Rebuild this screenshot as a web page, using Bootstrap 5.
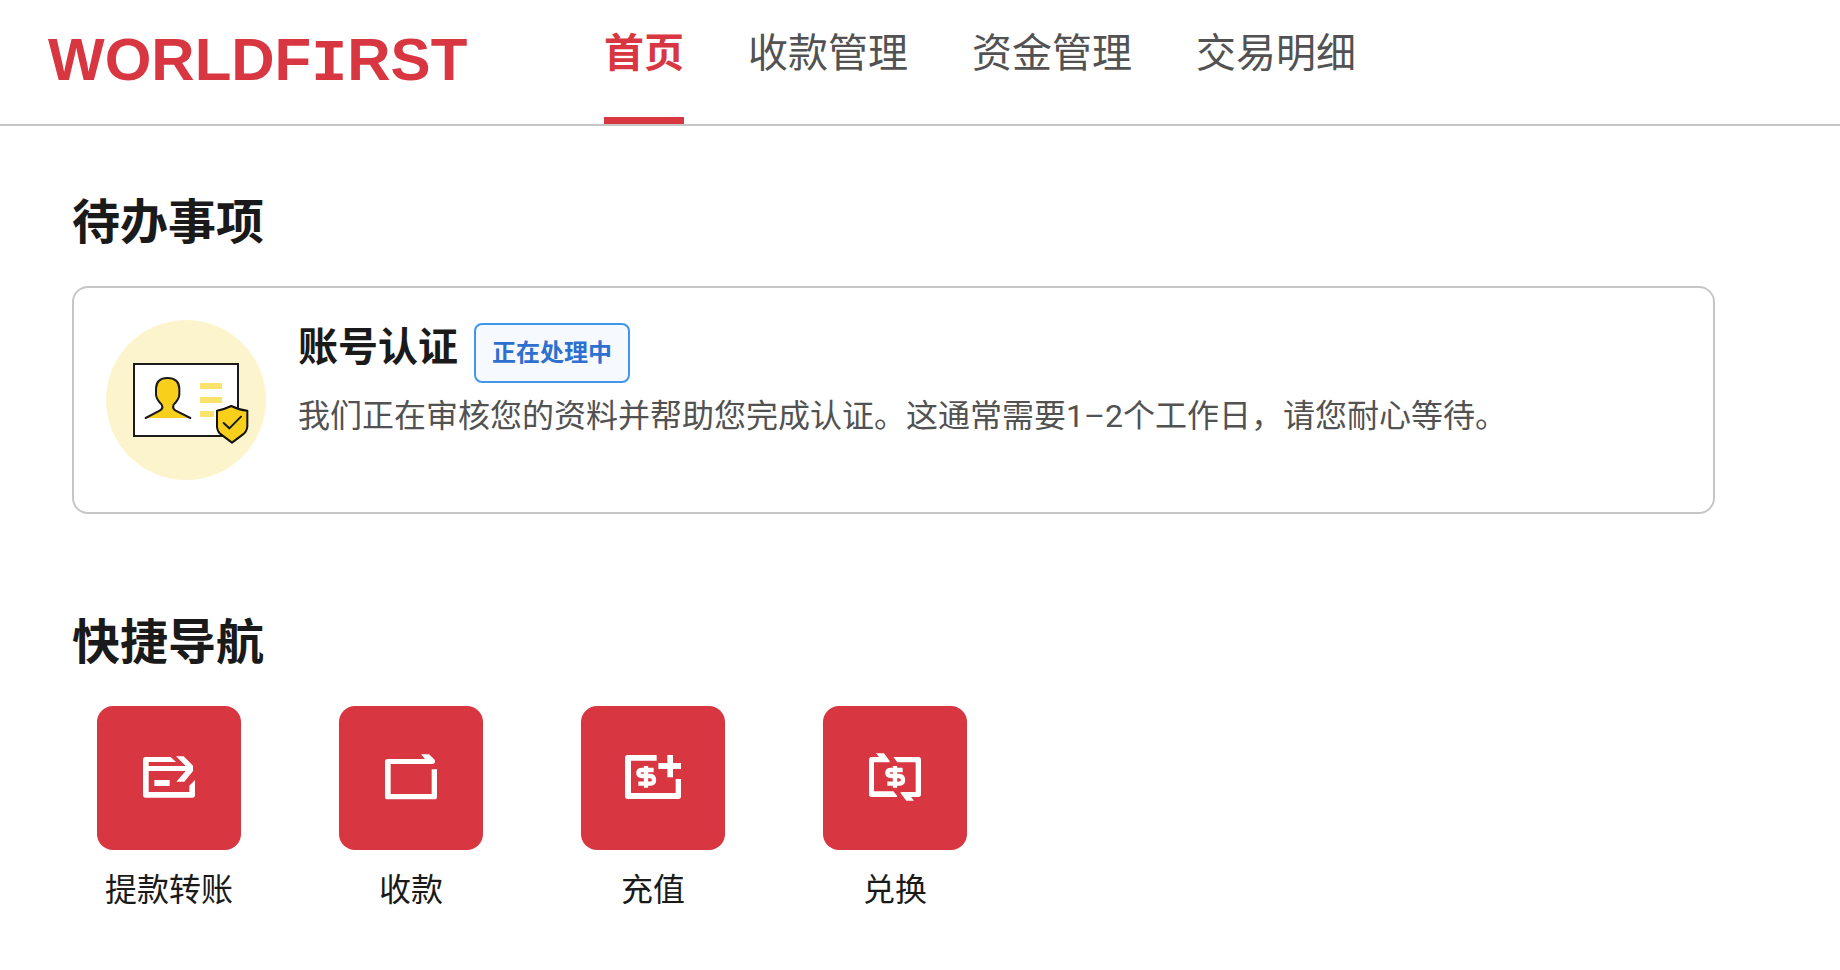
<!DOCTYPE html>
<html lang="zh-CN">
<head>
<meta charset="utf-8">
<meta name="viewport" content="width=device-width, initial-scale=1">
<title>WorldFirst</title>
<link href="https://cdn.jsdelivr.net/npm/bootstrap@5.3.0/dist/css/bootstrap.min.css" rel="stylesheet">
<style>
  :root { --wf-red: #d83640; --wf-ink: #1a1a1a; --wf-grey: #525252; --wf-line: #c6c6c6; }
  body { font-family: Roboto, "Noto Sans CJK SC", sans-serif; color: var(--wf-ink); background: #fff; }
  .wf-header { border-bottom: 2px solid var(--wf-line); padding-left: 48px; gap: 128px; }
  .wf-logo { font: 700 60px/120px "Liberation Sans", sans-serif; color: var(--wf-red); min-width: 428px; }
  .wf-logo:hover { color: var(--wf-red); }
  .wf-logo .slab { font-family: "Liberation Mono", monospace; }
  .wf-tabs { gap: 64px; }
  .wf-tabs .nav-link { padding: 24px 0 33px; font-size: 40px; line-height: 60px; color: var(--wf-grey); border-bottom: 7px solid transparent; }
  .wf-tabs .nav-link.active { color: var(--wf-red); font-weight: 700; border-color: var(--wf-red); }
  .wf-main { padding: 61px 125px 48px 72px; }
  .wf-heading { font-size: 48px; line-height: 72px; font-weight: 700; margin-bottom: 27px; }
  .wf-todo { border: 2px solid var(--wf-line); border-radius: 16px; padding: 32px; gap: 32px; margin-bottom: 93px; }
  .wf-todo svg { width: 160px; height: 160px; }
  .wf-title { font-size: 40px; line-height: 56px; font-weight: 700; }
  .wf-status { font-size: 24px; line-height: 56px; font-weight: 700; color: #2e6fd0; background: #f6faff; border: 2px solid #4096e8; border-radius: 8px; padding: 0 16px; margin-top: 3px; }
  .wf-desc { font-size: 32px; line-height: 48px; color: var(--wf-grey); margin-top: 9px; }
  .wf-quick { gap: 98px; padding-left: 25px; }
  .wf-tile { width: 144px; color: var(--wf-ink); font-size: 32px; line-height: 48px; }
  .wf-tile svg { width: 144px; height: 144px; border-radius: 16px; background: var(--wf-red); margin-bottom: 16px; }
</style>
</head>
<body>
<header class="wf-header d-flex align-items-start">
  <a class="wf-logo text-decoration-none" href="#">WORLDF<span class="slab">I</span>RST</a>
  <nav class="nav wf-tabs flex-nowrap text-nowrap" aria-label="主导航">
    <a class="nav-link active" aria-current="page" href="#">首页</a>
    <a class="nav-link" href="#">收款管理</a>
    <a class="nav-link" href="#">资金管理</a>
    <a class="nav-link" href="#">交易明细</a>
  </nav>
</header>
<main class="wf-main">
  <section>
    <h2 class="wf-heading">待办事项</h2>
    <div class="wf-todo d-flex">
      <svg class="flex-shrink-0" viewBox="33 30 480 480" aria-hidden="true">
        <circle cx="273" cy="270" r="240" fill="#fcf4cc"/>
        <path d="M117 162h312v216H117z" fill="#fff" stroke="#1a1a1a" stroke-width="6"/>
        <path d="M152 324 194 302Q206 296 200 284Q184 268 183 254V236Q184 204 217 204Q252 204 253 236V254Q252 268 236 284Q231 296 242 302L286 324" fill="#f8d01c"/>
        <path d="M152 324 194 302Q206 296 200 284Q184 268 183 254V236Q184 204 217 204Q252 204 253 236V254Q252 268 236 284Q231 296 242 302L286 324" fill="none" stroke="#1a1a1a" stroke-width="6" stroke-linecap="round"/>
        <path d="M315 219h66v18h-66zM315 261h66v18h-66zM315 303h42v18h-42z" fill="#fae26c"/>
        <path d="M409 288Q432 300 457 302V350Q455 366 443 374L411 398 379 374Q367 366 366 350V302Q388 298 409 288Z" fill="#f8d01c" stroke="#111" stroke-width="6" stroke-linejoin="round"/>
        <path d="M386 339 403 355 438 320" fill="none" stroke="#1a1a1a" stroke-width="6" stroke-linecap="round"/>
      </svg>
      <div>
        <div class="d-flex align-items-start gap-3">
          <h3 class="wf-title mb-0">账号认证</h3>
          <span class="wf-status">正在处理中</span>
        </div>
        <p class="wf-desc mb-0">我们正在审核您的资料并帮助您完成认证。这通常需要1–2个工作日，请您耐心等待。</p>
      </div>
    </div>
  </section>
  <section>
    <h2 class="wf-heading">快捷导航</h2>
    <nav class="wf-quick d-flex flex-wrap" aria-label="快捷导航">
      <a class="wf-tile d-flex flex-column align-items-center text-decoration-none" href="#">
        <svg viewBox="21 18 432 432" fill="#fff" aria-hidden="true">
          <path d="M167 171H242L258 186H176V198H287L258 169H281L309 197V213L283 245H259L287 213H176V276H298V257L315 240V285Q315 293 307 293H167Q159 293 159 285V179Q159 171 167 171ZM193 240H239V258H193Z"/>
        </svg>提款转账
      </a>
      <a class="wf-tile d-flex flex-column align-items-center text-decoration-none" href="#">
        <svg viewBox="27 18 432 432" fill="#fff" aria-hidden="true">
          <path d="M173 177H285L273 163H297L312 177Q316 182 315 187Q313 192 307 192H182V282H305V208H321V290Q321 298 313 298H173Q165 298 165 290V185Q165 177 173 177Z"/>
        </svg>收款
      </a>
      <a class="wf-tile d-flex flex-column align-items-center text-decoration-none" href="#">
        <svg viewBox="18 18 432 432" fill="#fff" aria-hidden="true">
          <path d="M158 165H245V182H168V279H302V237H318V289Q318 297 310 297H158Q150 297 150 289V173Q150 165 158 165ZM277 165H294V189H318V207H294V232H277V207H250V189H277Z"/>
          <path d="M236 210H202Q190 210 190 219T202 228H226Q237 229 237 240T225 251H190M213 198V263" fill="none" stroke="#fff" stroke-width="13"/>
        </svg>充值
      </a>
      <a class="wf-tile d-flex flex-column align-items-center text-decoration-none" href="#">
        <svg viewBox="24 18 432 432" fill="#fff" aria-hidden="true">
          <path d="M170 171H192L183 160H207L224 183V187H177V274H235L246 287V291H170Q162 291 162 283V179Q162 171 170 171ZM235 171H310Q318 171 318 179V283Q318 291 310 291H288L297 302H274L257 280V276H302V187H247Z"/>
          <path d="M263 210H229Q217 210 217 219T229 228H253Q264 229 264 240T252 251H217M240 198V263" fill="none" stroke="#fff" stroke-width="13"/>
        </svg>兑换
      </a>
    </nav>
  </section>
</main>
<script src="https://cdn.jsdelivr.net/npm/bootstrap@5.3.0/dist/js/bootstrap.bundle.min.js"></script>
</body>
</html>
